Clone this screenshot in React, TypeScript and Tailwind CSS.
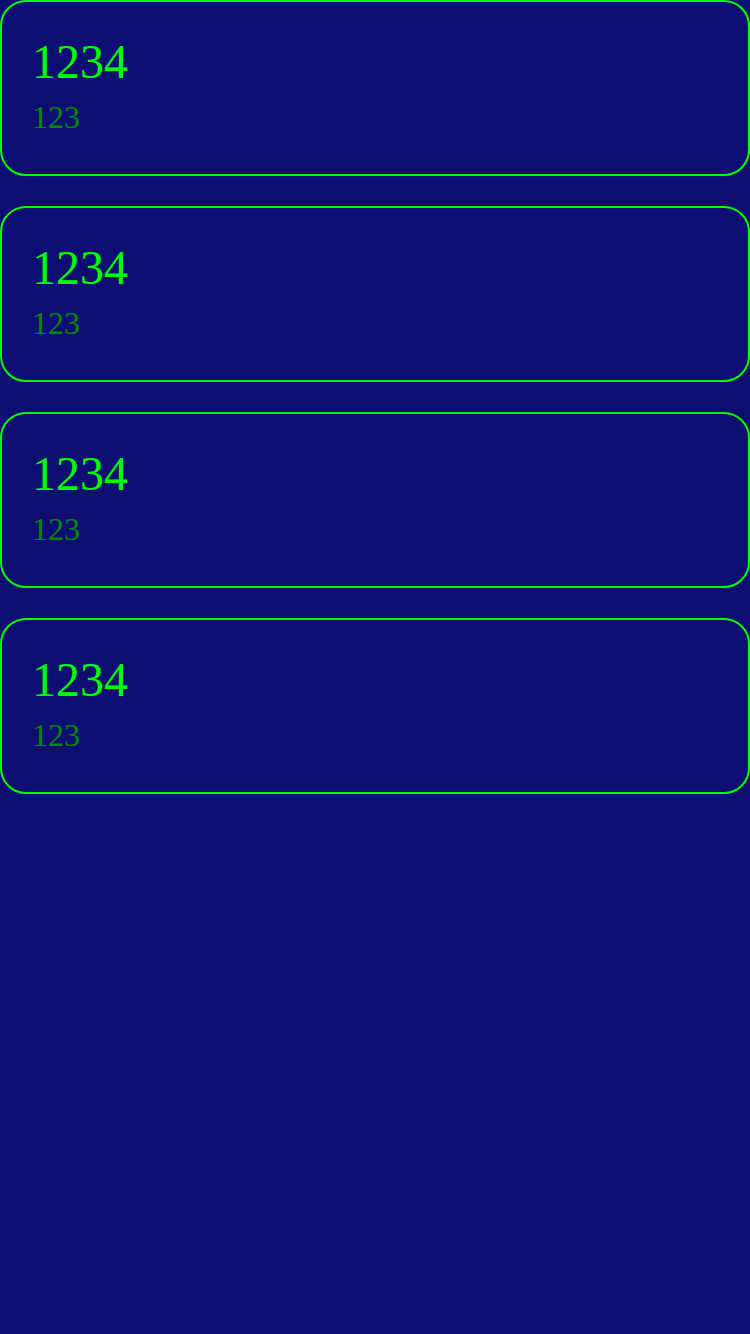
const cards = [1, 2, 3, 4]

export default function App() {
  return (
    <div className="min-h-[1334px] w-[750px] bg-[#0e0e72] font-['Liberation_Serif',serif]">
      <div className="flex flex-col gap-[30px]">
        {cards.map((c) => (
          <div key={c} className="h-[176px] rounded-[26px] border-2 border-[#00ff00] px-[30px] pt-[30px]">
            <div className="text-[48px] leading-[60px] text-[#00ff00]">1234</div>
            <div className="mt-[7px] text-[32px] leading-[36px] text-[#008a00]">123</div>
          </div>
        ))}
      </div>
    </div>
  )
}
